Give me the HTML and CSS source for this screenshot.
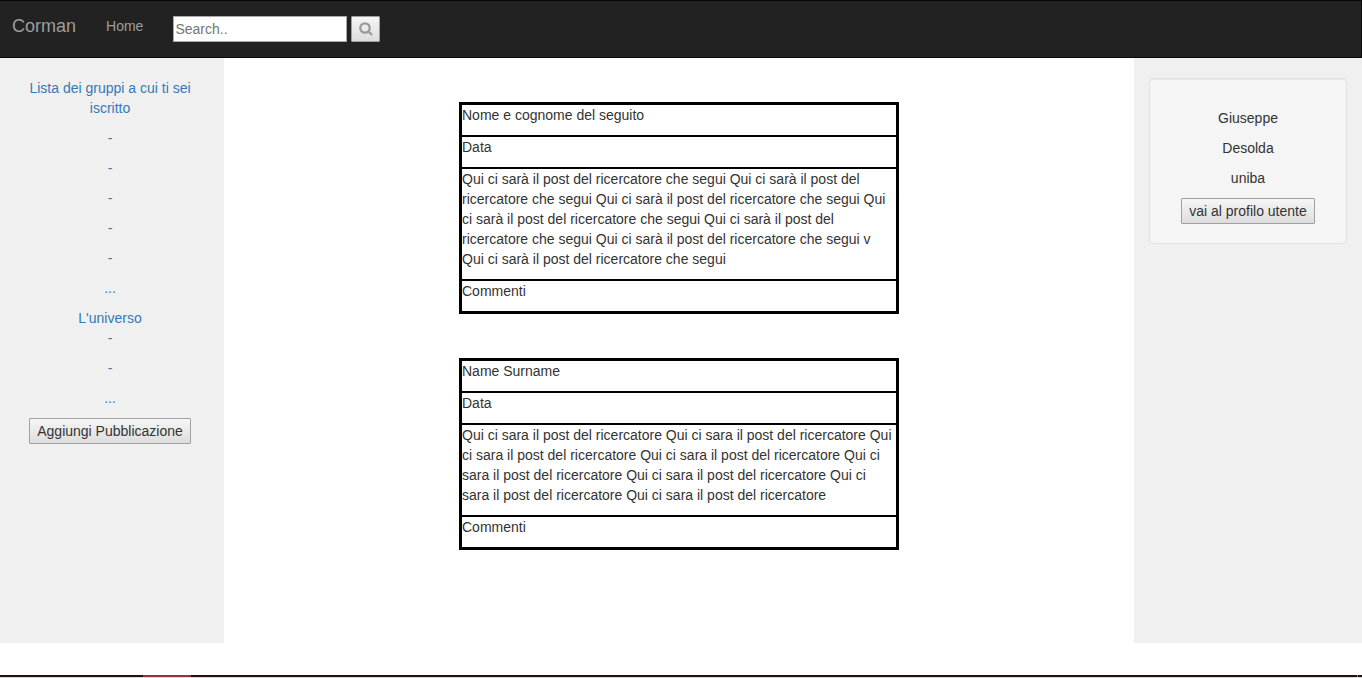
FILE: index.html
```html
<!DOCTYPE html>
<html lang="it">
<head>
<meta charset="utf-8">
<title>Corman</title>
<meta name="viewport" content="width=device-width, initial-scale=1">
<link rel="stylesheet" href="styles.css">
</head>
<body>
<nav class="navbar">
  <a class="brand" href="#">Corman</a>
  <a class="nav-link" href="#">Home</a>
  <form class="search">
    <input class="search-input" type="text" placeholder="Search.." aria-label="Search">
    <button class="btn search-btn" type="button" aria-label="Cerca">
      <svg class="search-icon" viewBox="0 0 14 14" aria-hidden="true"><circle cx="6" cy="6" r="4.7"/><path d="M9.3 9.3L13 13"/></svg>
    </button>
  </form>
</nav>
<div class="content">
  <aside class="side side-left">
    <p><a href="#">Lista dei gruppi a cui ti sei iscritto</a></p>
    <p><a href="#">-</a></p>
    <p><a href="#">-</a></p>
    <p><a href="#">-</a></p>
    <p><a href="#">-</a></p>
    <p><a href="#">-</a></p>
    <p><a href="#">...</a></p>
    <div><a href="#">L'universo</a></div>
    <p><a href="#">-</a></p>
    <p><a href="#">-</a></p>
    <p><a href="#">...</a></p>
    <button class="btn" type="button">Aggiungi Pubblicazione</button>
  </aside>
  <main class="feed">
    <article class="post">
      <div class="post-row">Nome e cognome del seguito</div>
      <div class="post-row">Data</div>
      <div class="post-row">Qui ci sarà il post del ricercatore che segui Qui ci sarà il post del ricercatore che segui Qui ci sarà il post del ricercatore che segui Qui ci sarà il post del ricercatore che segui Qui ci sarà il post del ricercatore che segui Qui ci sarà il post del ricercatore che segui v Qui ci sarà il post del ricercatore che segui</div>
      <div class="post-row">Commenti</div>
    </article>
    <article class="post">
      <div class="post-row">Name Surname</div>
      <div class="post-row">Data</div>
      <div class="post-row">Qui ci sara il post del ricercatore Qui ci sara il post del ricercatore Qui ci sara il post del ricercatore Qui ci sara il post del ricercatore Qui ci sara il post del ricercatore Qui ci sara il post del ricercatore Qui ci sara il post del ricercatore Qui ci sara il post del ricercatore</div>
      <div class="post-row">Commenti</div>
    </article>
  </main>
  <aside class="side side-right">
    <section class="well">
      <p>Giuseppe</p>
      <p>Desolda</p>
      <p>uniba</p>
      <button class="btn" type="button">vai al profilo utente</button>
    </section>
  </aside>
</div>
<footer class="strip"><span class="strip-mark"></span><span class="strip-tick"></span></footer>
</body>
</html>
```
FILE: styles.css
```css
* {
  box-sizing: border-box;
}

body {
  display: flex;
  flex-direction: column;
  min-height: 100vh;
  margin: 0;
  background: #fff;
  color: #333;
  font: 14px/20px "Liberation Sans", Arial, sans-serif;
}

a {
  color: #337ab7;
  text-decoration: none;
}

p {
  margin: 0 0 10px;
}

.navbar {
  display: flex;
  align-items: flex-start;
  padding: 15px 12px;
  background: #222;
  border: 1px solid #080808;
  border-left: 0;
}

.brand,
.nav-link {
  color: #9d9d9d;
}

.brand {
  margin-right: 30px;
  font-size: 18px;
}

.nav-link {
  margin-right: 30px;
}

.search {
  display: flex;
  gap: 4px;
}

.search-input {
  width: 174px;
  height: 26px;
  padding: 1px;
  border: 1px solid #a9a9a9;
  background: #fff;
  color: #333;
  font: inherit;
}

.search-input::placeholder {
  color: #757575;
  opacity: 1;
}

.btn {
  height: 26px;
  padding: 0 7px;
  border: 1px solid #a0a0a0;
  border-radius: 1px;
  background: linear-gradient(#f6f6f6, #dddddd);
  color: #333;
  font: inherit;
}

.search-btn {
  display: flex;
  align-items: center;
  justify-content: center;
  width: 29px;
  padding: 0;
}

.search-icon {
  width: 14px;
  height: 14px;
  fill: none;
  stroke: #999;
  stroke-width: 2.3;
}

.content {
  display: grid;
  grid-template-columns: 224fr 910fr 228fr;
  flex: 1;
}

.side {
  padding: 20px 15px;
  background: #f0f0f0;
  text-align: center;
}

.side-left {
  padding-left: 12px;
  padding-right: 16px;
}

.feed {
  display: flex;
  flex-direction: column;
  align-items: center;
  gap: 44px;
  padding: 44px 15px;
}

.post {
  width: 100%;
  max-width: 440px;
  border: 3px solid #000;
}

.post-row {
  padding-bottom: 10px;
}

.post-row + .post-row {
  border-top: 2px solid #000;
}

.well {
  padding: 29px 19px 19px;
  border: 1px solid #e3e3e3;
  border-radius: 4px;
  background: #f5f5f5;
  box-shadow: inset 0 1px 1px rgba(0, 0, 0, 0.05);
}

.strip {
  display: flex;
  justify-content: space-between;
  height: 3px;
  margin-top: 32px;
  padding: 0 4px 0 143px;
  background: #260f0d;
  border-bottom: 1px solid #dcd8dc;
}

.strip-mark {
  width: 48px;
  background: #8c3b30;
}

.strip-tick {
  width: 1px;
  background: #8a7c7c;
}
```
